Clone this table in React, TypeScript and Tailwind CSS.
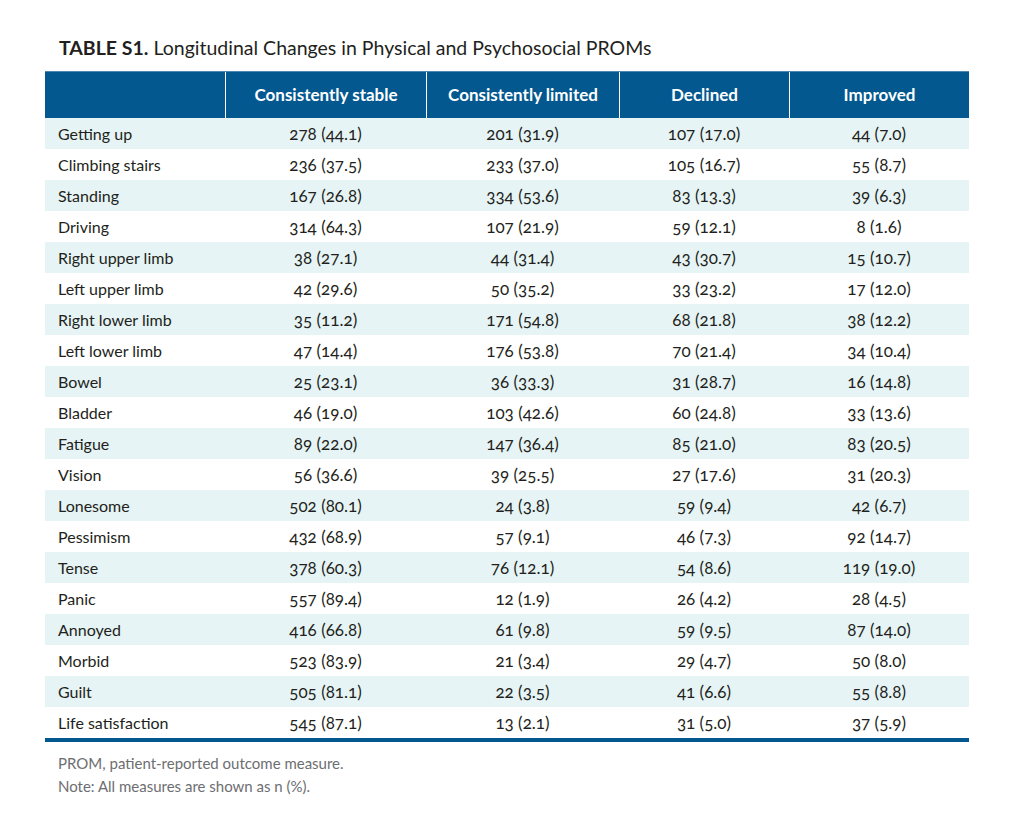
import React from "react";

const rows: [string, string, string, string, string][] = [
  ["Getting up", "278 (44.1)", "201 (31.9)", "107 (17.0)", "44 (7.0)"],
  ["Climbing stairs", "236 (37.5)", "233 (37.0)", "105 (16.7)", "55 (8.7)"],
  ["Standing", "167 (26.8)", "334 (53.6)", "83 (13.3)", "39 (6.3)"],
  ["Driving", "314 (64.3)", "107 (21.9)", "59 (12.1)", "8 (1.6)"],
  ["Right upper limb", "38 (27.1)", "44 (31.4)", "43 (30.7)", "15 (10.7)"],
  ["Left upper limb", "42 (29.6)", "50 (35.2)", "33 (23.2)", "17 (12.0)"],
  ["Right lower limb", "35 (11.2)", "171 (54.8)", "68 (21.8)", "38 (12.2)"],
  ["Left lower limb", "47 (14.4)", "176 (53.8)", "70 (21.4)", "34 (10.4)"],
  ["Bowel", "25 (23.1)", "36 (33.3)", "31 (28.7)", "16 (14.8)"],
  ["Bladder", "46 (19.0)", "103 (42.6)", "60 (24.8)", "33 (13.6)"],
  ["Fatigue", "89 (22.0)", "147 (36.4)", "85 (21.0)", "83 (20.5)"],
  ["Vision", "56 (36.6)", "39 (25.5)", "27 (17.6)", "31 (20.3)"],
  ["Lonesome", "502 (80.1)", "24 (3.8)", "59 (9.4)", "42 (6.7)"],
  ["Pessimism", "432 (68.9)", "57 (9.1)", "46 (7.3)", "92 (14.7)"],
  ["Tense", "378 (60.3)", "76 (12.1)", "54 (8.6)", "119 (19.0)"],
  ["Panic", "557 (89.4)", "12 (1.9)", "26 (4.2)", "28 (4.5)"],
  ["Annoyed", "416 (66.8)", "61 (9.8)", "59 (9.5)", "87 (14.0)"],
  ["Morbid", "523 (83.9)", "21 (3.4)", "29 (4.7)", "50 (8.0)"],
  ["Guilt", "505 (81.1)", "22 (3.5)", "41 (6.6)", "55 (8.8)"],
  ["Life satisfaction", "545 (87.1)", "13 (2.1)", "31 (5.0)", "37 (5.9)"],
];

export default function App() {
  return (
    <div
      className="w-[1016px] h-[824px] bg-white pl-[45px] pt-[36px] text-[#231f20]"
      style={{ fontFamily: "Lato, 'Liberation Sans', sans-serif" }}
    >
      <h1 className="pl-[14px] text-[19.5px] leading-[24px] h-[35px] text-[#231f20]">
        <span className="font-bold">TABLE S1.</span> Longitudinal Changes in Physical and Psychosocial PROMs
      </h1>
      <div className="w-[924px]">
        <div className="flex h-[47px] bg-[#03588f] border-t border-[#4d86ae] text-white font-bold text-[17px]">
          <div className="w-[180px]" />
          <div className="w-[201px] border-l border-white flex items-center justify-center">Consistently stable</div>
          <div className="w-[193px] border-l border-white flex items-center justify-center">Consistently limited</div>
          <div className="w-[170px] border-l border-white flex items-center justify-center">Declined</div>
          <div className="w-[180px] border-l border-white flex items-center justify-center">Improved</div>
        </div>
        {rows.map((r, i) => (
          <div
            key={r[0]}
            className={`flex h-[31px] items-center text-[17px] oldstyle-nums ${i % 2 === 0 ? "bg-[#e6f4f5]" : "bg-white"}`}
          >
            <div className="w-[180px] pl-[13px] text-[16px]">{r[0]}</div>
            <div className="w-[201px] text-center">{r[1]}</div>
            <div className="w-[193px] text-center">{r[2]}</div>
            <div className="w-[170px] text-center">{r[3]}</div>
            <div className="w-[180px] text-center">{r[4]}</div>
          </div>
        ))}
        <div className="h-[4px] bg-[#03588f]" />
      </div>
      <div className="pl-[13px] pt-[10px] text-[15px] leading-[23px] text-[#6d6e71]">
        <p>PROM, patient-reported outcome measure.</p>
        <p>Note: All measures are shown as n (%).</p>
      </div>
    </div>
  );
}
